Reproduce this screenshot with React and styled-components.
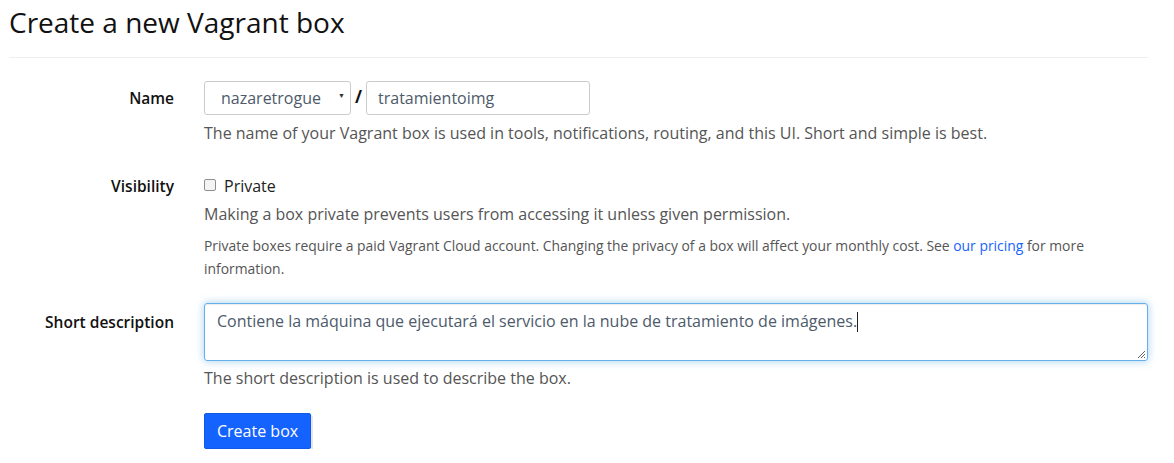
import React from 'react';
import styled, { createGlobalStyle } from 'styled-components';

const GlobalStyle = createGlobalStyle`
  html, body {
    margin: 0;
    padding: 0;
    background: #ffffff;
  }
  body {
    font-family: "Open Sans", "Liberation Sans", sans-serif;
    font-size: 16px;
    color: #333333;
  }
  * {
    box-sizing: border-box;
  }
`;

const Page = styled.div`
  width: 1148px;
  padding: 0 0 0 9px;
`;

const Title = styled.h1`
  margin: 0;
  padding-top: 3px;
  font-size: 28px;
  font-weight: 400;
  line-height: 38px;
  color: #111111;
`;

const Divider = styled.hr`
  margin: 16px 0 23px;
  border: 0;
  border-top: 1px solid #eeeeee;
`;

const Form = styled.form`
  display: flex;
  flex-direction: column;
`;

const Row = styled.div`
  display: grid;
  grid-template-columns: 165px 1fr;
  column-gap: 30px;
  margin-bottom: ${(p) => p.$gap || 0}px;
`;

const Label = styled.label`
  text-align: right;
  font-weight: 600;
  font-size: 15.5px;
  color: #111111;
  padding-top: ${(p) => p.$top || 0}px;
  line-height: 22px;
`;

const Field = styled.div`
  display: flex;
  flex-direction: column;
`;

const Inline = styled.div`
  display: flex;
  align-items: center;
  gap: 4px;
`;

const SelectBox = styled.div`
  position: relative;
  width: 147px;
  height: 34px;
  border: 1px solid #cccccc;
  border-radius: 3px;
  display: flex;
  align-items: center;
  padding-left: 16px;
  color: #4d5a6b;
  font-size: 16px;

  &::after {
    content: '▼';
    position: absolute;
    right: 5px;
    top: 9px;
    font-size: 7px;
    color: #333;
  }
`;

const Slash = styled.span`
  font-weight: 700;
  font-size: 17px;
  color: #111;
  margin-top: -3px;
`;

const TextInput = styled.div`
  width: 224px;
  height: 34px;
  border: 1px solid #cccccc;
  border-radius: 3px;
  display: flex;
  align-items: center;
  padding-left: 11px;
  color: #4d5a6b;
  font-size: 16px;
`;

const Help = styled.p`
  margin: ${(p) => p.$top || 0}px 0 0;
  color: #555555;
  font-size: ${(p) => (p.$small ? 13.9 : 16)}px;
  line-height: ${(p) => (p.$small ? 23 : 22)}px;
`;

const Check = styled.label`
  display: flex;
  align-items: center;
  gap: 8px;
  font-size: 16px;
  color: #222;
  line-height: 22px;
`;

const Box = styled.span`
  width: 12px;
  height: 12px;
  border: 1px solid #8f8f8f;
  border-radius: 2px;
  background: #f4f4f4;
  margin-top: -2px;
`;

const Link = styled.a`
  color: #1563ff;
  text-decoration: none;
`;

const TextArea = styled.div`
  position: relative;
  height: 58px;
  border: 1px solid #66afe9;
  border-radius: 3px;
  box-shadow: inset 0 1px 1px rgba(0, 0, 0, 0.075), 0 0 8px rgba(102, 175, 233, 0.6);
  padding: 6px 12px;
  color: #4d5a6b;
  font-size: 16px;
  line-height: 22px;
`;

const Caret = styled.span`
  display: inline-block;
  width: 1px;
  height: 20px;
  background: #222;
  vertical-align: -5px;
`;

const Grip = styled.svg`
  position: absolute;
  right: 1px;
  bottom: 1px;
`;

const Button = styled.button`
  align-self: flex-start;
  margin-top: 24px;
  background: #1563ff;
  color: #ffffff;
  border: 1px solid #0f5ae6;
  border-radius: 2px;
  font-family: inherit;
  font-size: 16px;
  height: 36px;
  padding: 0 12px;
  box-shadow: 2px 2px 0 rgba(0, 0, 0, 0.1);
`;

export default function App() {
  return (
    <>
      <GlobalStyle />
      <Page>
        <Title>Create a new Vagrant box</Title>
        <Divider />
        <Form>
          <Row $gap={31}>
            <Label $top={6}>Name</Label>
            <Field>
              <Inline>
                <SelectBox>nazaretrogue</SelectBox>
                <Slash>/</Slash>
                <TextInput>tratamientoimg</TextInput>
              </Inline>
              <Help $top={7}>
                The name of your Vagrant box is used in tools, notifications, routing, and this UI. Short and simple is best.
              </Help>
            </Field>
          </Row>
          <Row $gap={23}>
            <Label>Visibility</Label>
            <Field>
              <Check>
                <Box />
                Private
              </Check>
              <Help $top={6}>
                Making a box private prevents users from accessing it unless given permission.
              </Help>
              <Help $small $top={9}>
                Private boxes require a paid Vagrant Cloud account. Changing the privacy of a box will affect your monthly cost. See{' '}
                <Link href="#">our pricing</Link> for more information.
              </Help>
            </Field>
          </Row>
          <Row>
            <Label $top={8}>Short description</Label>
            <Field>
              <TextArea>
                Contiene la máquina que ejecutará el servicio en la nube de tratamiento de imágenes.
                <Caret />
                <Grip width="10" height="10" viewBox="0 0 10 10">
                  <path d="M9 2 L2 9 M9 5 L5 9 M9 8 L8 9" stroke="#666" strokeWidth="1" />
                </Grip>
              </TextArea>
              <Help $top={6}>The short description is used to describe the box.</Help>
              <Button type="button">Create box</Button>
            </Field>
          </Row>
        </Form>
      </Page>
    </>
  );
}
